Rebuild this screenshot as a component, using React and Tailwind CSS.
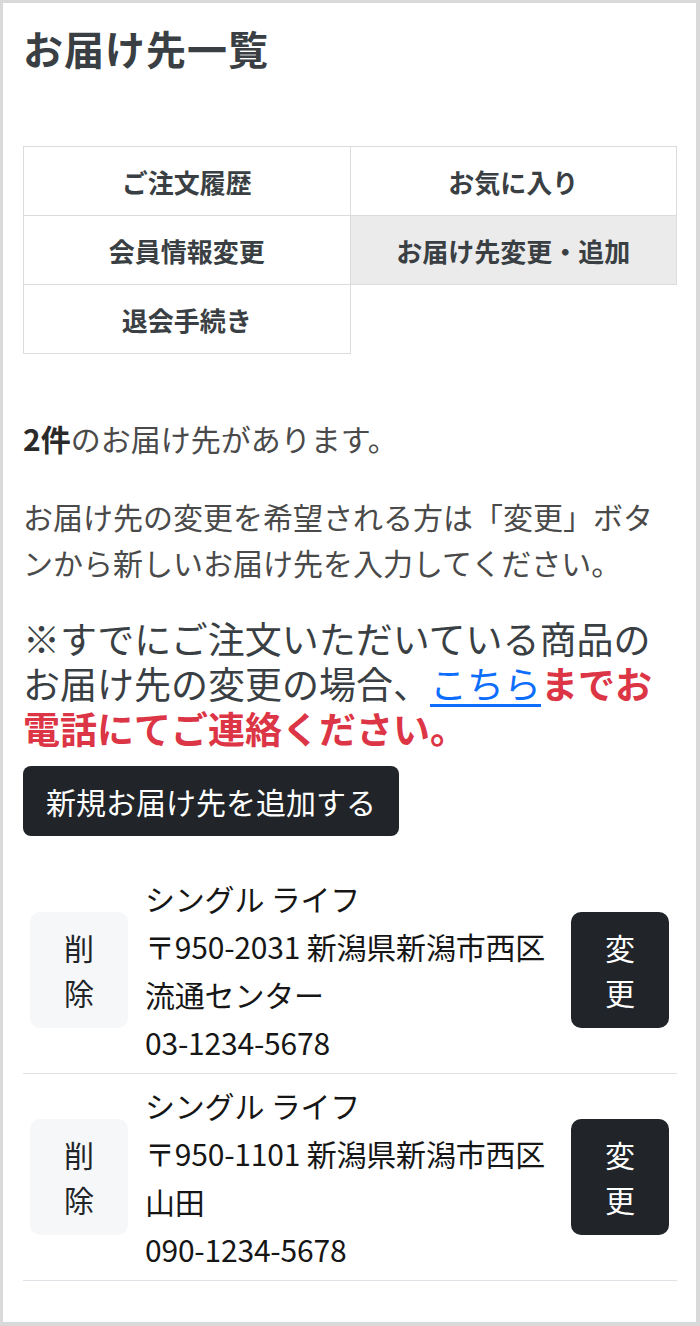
const addresses = [
  {
    name: "シングル ライフ",
    address: "〒950-2031 新潟県新潟市西区",
    building: "流通センター",
    tel: "03-1234-5678",
  },
  {
    name: "シングル ライフ",
    address: "〒950-1101 新潟県新潟市西区",
    building: "山田",
    tel: "090-1234-5678",
  },
];

const menu = [
  { label: "ご注文履歴" },
  { label: "お気に入り" },
  { label: "会員情報変更" },
  { label: "お届け先変更・追加", active: true },
  { label: "退会手続き" },
];

function AddressRow({ item }) {
  return (
    <div className="flex items-center border-b border-[#dee2e6] py-[7px]">
      <button className="ml-[7px] flex h-[116px] w-[98px] shrink-0 items-center justify-center rounded-[10px] bg-[#f6f7f9] text-[30px] leading-[45px] text-[#212529]">
        <span className="block w-[30px] break-all text-center">削除</span>
      </button>
      <div className="ml-[17px] flex-1 text-[30px] leading-[48px] tracking-[-0.2px] text-[#161616]">
        <div>{item.name}</div>
        <div>{item.address}</div>
        <div>{item.building}</div>
        <div>{item.tel}</div>
      </div>
      <button className="mr-[8px] flex h-[116px] w-[98px] shrink-0 items-center justify-center rounded-[10px] bg-[#212529] text-[30px] leading-[45px] text-white">
        <span className="block w-[30px] break-all text-center">変更</span>
      </button>
    </div>
  );
}

export default function App() {
  return (
    <div className="box-border h-[1326px] w-[700px] border-t-[3px] border-l-[3px] border-r-4 border-b-4 border-[#d9d9d9] bg-white pl-[20px] pr-[19px] pt-[21px] font-['Noto_Sans_CJK_JP','Noto_Sans',sans-serif]">
      <h1 className="text-[40px] font-bold leading-[48px] tracking-[1px] text-[#3a3f44]">お届け先一覧</h1>

      <div className="mt-[74px] grid grid-cols-2 border-l border-t border-[#dcdcdc]">
        {menu.map((m) => (
          <div
            key={m.label}
            className={
              "flex h-[69px] items-center justify-center border-b border-r border-[#dcdcdc] text-[26px] font-bold text-[#3a3f44] " +
              (m.active ? "bg-[#ebebeb]" : "bg-white")
            }
          >
            {m.label}
          </div>
        ))}
      </div>

      <p className="mt-[61px] text-[30px] leading-[46px] text-[#4a4a4a]">
        <span className="font-bold text-[#2a2a2a]">2件</span>のお届け先があります。
      </p>
      <p className="mt-[32px] text-[30px] leading-[46px] text-[#4a4a4a]">
        お届け先の変更を希望される方は「変更」ボタンから新しいお届け先を入力してください。
      </p>

      <p className="mt-[31px] text-[37px] font-normal leading-[45px] text-[#3a3f44]">
        ※すでにご注文いただいている商品のお届け先の変更の場合、
        <a href="#" className="text-[#0d6efd] underline underline-offset-[5px]">こちら</a>
        <span className="font-bold text-[#dc3545]">までお電話にてご連絡ください。</span>
      </p>

      <button className="mt-[15px] flex h-[70px] items-center rounded-[8px] bg-[#212529] px-[23px] text-[30px] text-white">
        新規お届け先を追加する
      </button>

      <div className="mt-[31px]">
        {addresses.map((a, i) => (
          <AddressRow key={i} item={a} />
        ))}
      </div>
    </div>
  );
}
